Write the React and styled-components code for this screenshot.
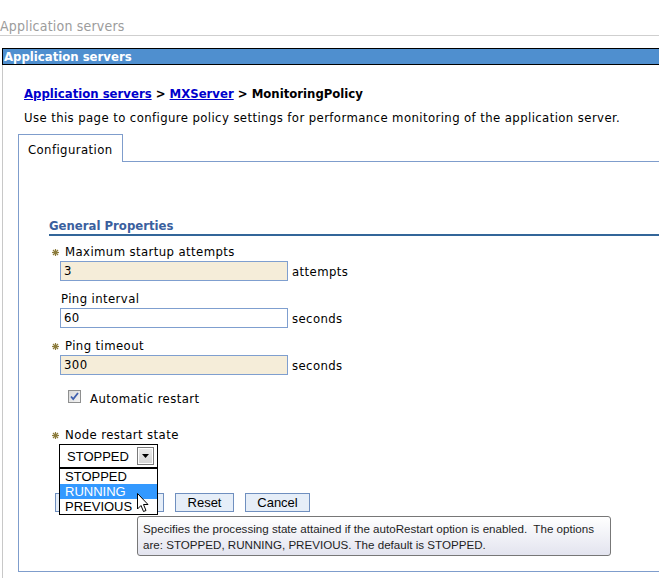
import React from 'react';
import styled, { createGlobalStyle } from 'styled-components';

const GlobalStyle = createGlobalStyle`
  html, body {
    margin: 0;
    padding: 0;
    background: #ffffff;
    overflow: hidden;
  }
  body {
    font-family: Tahoma, "DejaVu Sans Condensed", "DejaVu Sans", sans-serif;
    font-size: 13px;
    letter-spacing: 0.4px;
    color: #000000;
  }
`;

const UI_FONT = `"Segoe UI", "Liberation Sans", Arial, sans-serif`;

const Page = styled.div`
  width: 659px;
  height: 578px;
  overflow: hidden;
`;

const PageTitle = styled.div`
  height: 35px;
  display: flex;
  align-items: flex-end;
  border-bottom: 1px solid #cfcfcf;
  color: #9c9c9c;
  font-size: 14px;
  line-height: 17px;
  letter-spacing: 0.2px;
`;

const Portlet = styled.div`
  margin: 12px 0 0 2px;
  width: 690px;
`;

const PortletBar = styled.div`
  height: 15px;
  border: 1px solid #000000;
  background: #4f8fcf;
  color: #ffffff;
  font-weight: bold;
  letter-spacing: 0;
  line-height: 15px;
  padding-left: 1px;
`;

const PortletBody = styled.div`
  border-left: 1px solid #c8c8c8;
  padding: 21px 0 6px 15px;
`;

const Crumbs = styled.div`
  padding-left: 6px;
  font-weight: bold;
  letter-spacing: 0;
  line-height: 16px;

  a {
    color: #0000cc;
    text-decoration: underline;
  }
`;

const Intro = styled.div`
  padding-left: 6px;
  margin-top: 8px;
  line-height: 16px;
`;

const Tabs = styled.div`
  display: flex;
  margin-top: 8px;
`;

const Tab = styled.div`
  width: 105px;
  height: 28px;
  border: 1px solid #7f9dcc;
  border-bottom: none;
  box-sizing: border-box;
  padding: 7px 0 0 9px;
  line-height: 16px;
`;

const TabFill = styled.div`
  flex: 1;
  border-bottom: 1px solid #7f9dcc;
`;

const TabPanel = styled.div`
  border-left: 1px solid #7f9dcc;
  border-bottom: 1px solid #7f9dcc;
  height: 410px;
  padding: 56px 0 0 30px;
  box-sizing: border-box;
`;

const SectionTitle = styled.div`
  color: #3a609e;
  font-weight: bold;
  letter-spacing: 0;
  line-height: 16px;
  border-bottom: 2px solid #336699;
  margin-bottom: 8px;
`;

const Field = styled.div`
  padding-left: 11px;
  margin-bottom: ${(p) => p.$gap ?? 10}px;
  position: relative;
`;

const Label = styled.div`
  line-height: 16px;
  padding-left: 1px;
  margin-bottom: 1px;
  display: flex;
  align-items: center;
`;

const Star = styled.svg`
  width: 7px;
  height: 7px;
  margin-left: -9px;
  margin-right: 6px;
`;

const InputRow = styled.div`
  display: flex;
  align-items: center;
  gap: 4px;
`;

const TextBox = styled.div`
  width: 228px;
  height: 20px;
  box-sizing: border-box;
  border: 1px solid #7f9fcf;
  background: ${(p) => (p.$required ? '#f5edd9' : '#ffffff')};
  padding-left: 3px;
  line-height: 18px;
`;

const CheckRow = styled.div`
  display: flex;
  align-items: center;
  padding-left: 19px;
  margin: 13px 0 22px;
  height: 17px;
`;

const CheckLabel = styled.span`
  margin-left: 9px;
  padding-top: 4px;
`;

const SelectWrap = styled.div`
  position: relative;
  width: 99px;
  margin-left: -1px;
`;

const SelectBox = styled.div`
  height: 24px;
  box-sizing: border-box;
  border: 1px solid #000000;
  display: flex;
  align-items: center;
  justify-content: space-between;
  padding: 0 3px 0 7px;
  font-family: ${UI_FONT};
  font-size: 13px;
  letter-spacing: 0;
`;

const ArrowButton = styled.div`
  width: 17px;
  height: 18px;
  box-sizing: border-box;
  border: 1px solid #7a7a7a;
  box-shadow: inset 0 0 0 1px #ffffff;
  background: linear-gradient(#ececec, #d4d4d4);
  display: flex;
  align-items: center;
  justify-content: center;
`;

const DropList = styled.ul`
  position: absolute;
  top: 100%;
  left: 0;
  z-index: 3;
  margin: 0;
  padding: 0;
  list-style: none;
  width: 99px;
  box-sizing: border-box;
  border: 1px solid #000000;
  background: #ffffff;
  font-family: ${UI_FONT};
  font-size: 13px;
  letter-spacing: 0;
`;

const DropItem = styled.li`
  height: 15px;
  line-height: 15px;
  padding-left: 5px;
  background: ${(p) => (p.$active ? '#3399ff' : '#ffffff')};
  color: ${(p) => (p.$active ? '#ffffff' : '#000000')};
`;

const ButtonRow = styled.div`
  position: relative;
  display: flex;
  gap: 11px;
  padding-left: 6px;
  margin-top: 25px;
`;

const Button = styled.div`
  width: ${(p) => p.$w}px;
  height: 19px;
  box-sizing: border-box;
  border: 1px solid #6f8fbf;
  background: #e6eef8;
  font-family: ${UI_FONT};
  font-size: 13px;
  letter-spacing: 0;
  line-height: 17px;
  text-align: center;
`;

const Tooltip = styled.div`
  position: absolute;
  left: 88px;
  top: 23px;
  z-index: 4;
  width: 474px;
  height: 40px;
  box-sizing: border-box;
  border: 1px solid #777777;
  border-radius: 3px;
  background: linear-gradient(#ffffff, #e3e4ef);
  padding: 4px 0 0 5px;
  font-family: ${UI_FONT};
  font-size: 11.6px;
  letter-spacing: 0;
  line-height: 16px;
  color: #1e1e1e;
  white-space: pre;
`;

const Cursor = styled.svg`
  position: absolute;
  left: 88px;
  top: 0px;
  z-index: 5;
  width: 12px;
  height: 20px;
`;

function StarIcon() {
  return (
    <Star viewBox="0 0 7 7">
      <g stroke="#8b7b3c" strokeWidth="1.2">
        <line x1="3.5" y1="0" x2="3.5" y2="7" />
        <line x1="0" y1="3.5" x2="7" y2="3.5" />
        <line x1="1" y1="1" x2="6" y2="6" />
        <line x1="6" y1="1" x2="1" y2="6" />
      </g>
    </Star>
  );
}

function TextField({ label, value, unit, required }) {
  return (
    <Field>
      <Label>
        {required && <StarIcon />}
        {label}
      </Label>
      <InputRow>
        <TextBox $required={required}>{value}</TextBox>
        {unit}
      </InputRow>
    </Field>
  );
}

export default function App() {
  return (
    <Page>
      <GlobalStyle />
      <PageTitle>Application servers</PageTitle>
      <Portlet>
        <PortletBar>Application servers</PortletBar>
        <PortletBody>
          <Crumbs>
            <a>Application servers</a> &gt; <a>MXServer</a> &gt; MonitoringPolicy
          </Crumbs>
          <Intro>
            Use this page to configure policy settings for performance monitoring of the application server.
          </Intro>
          <Tabs>
            <Tab>Configuration</Tab>
            <TabFill />
          </Tabs>
          <TabPanel>
            <SectionTitle>General Properties</SectionTitle>
            <TextField required label="Maximum startup attempts" value="3" unit="attempts" />
            <TextField label="Ping interval" value="60" unit="seconds" />
            <TextField required label="Ping timeout" value="300" unit="seconds" />

            <CheckRow>
              <svg width="13" height="13" viewBox="0 0 13 13">
                <defs>
                  <linearGradient id="cb" x1="0" y1="0" x2="1" y2="1">
                    <stop offset="0" stopColor="#d8d8d8" />
                    <stop offset="1" stopColor="#f4f4f4" />
                  </linearGradient>
                </defs>
                <rect x="0.5" y="0.5" width="12" height="12" fill="url(#cb)" stroke="#8e8f8f" />
                <path d="M3 6.5 L5.2 9 L10 3" fill="none" stroke="#3f5fae" strokeWidth="1.8" />
              </svg>
              <CheckLabel>Automatic restart</CheckLabel>
            </CheckRow>

            <Field $gap={0}>
              <Label>
                <StarIcon />
                Node restart state
              </Label>
              <SelectWrap>
                <SelectBox>
                  STOPPED
                  <ArrowButton>
                    <svg width="7" height="4" viewBox="0 0 7 4">
                      <path d="M0 0 H7 L3.5 4 Z" fill="#000000" />
                    </svg>
                  </ArrowButton>
                </SelectBox>
                <DropList>
                  <DropItem>STOPPED</DropItem>
                  <DropItem $active>RUNNING</DropItem>
                  <DropItem>PREVIOUS</DropItem>
                </DropList>
              </SelectWrap>
            </Field>

            <ButtonRow>
              <Button $w={57}>Apply</Button>
              <Button $w={41}>OK</Button>
              <Button $w={59}>Reset</Button>
              <Button $w={65}>Cancel</Button>
              <Cursor viewBox="0 0 12 20">
                <path
                  d="M0.5 0.5 V16 L4 12.5 L6.5 18.5 L9 17.5 L6.5 11.5 H11 Z"
                  fill="#ffffff"
                  stroke="#000000"
                  strokeWidth="1"
                />
              </Cursor>
              <Tooltip>
                {'Specifies the processing state attained if the autoRestart option is enabled.  The options\nare: STOPPED, RUNNING, PREVIOUS. The default is STOPPED.'}
              </Tooltip>
            </ButtonRow>
          </TabPanel>
        </PortletBody>
      </Portlet>
    </Page>
  );
}
